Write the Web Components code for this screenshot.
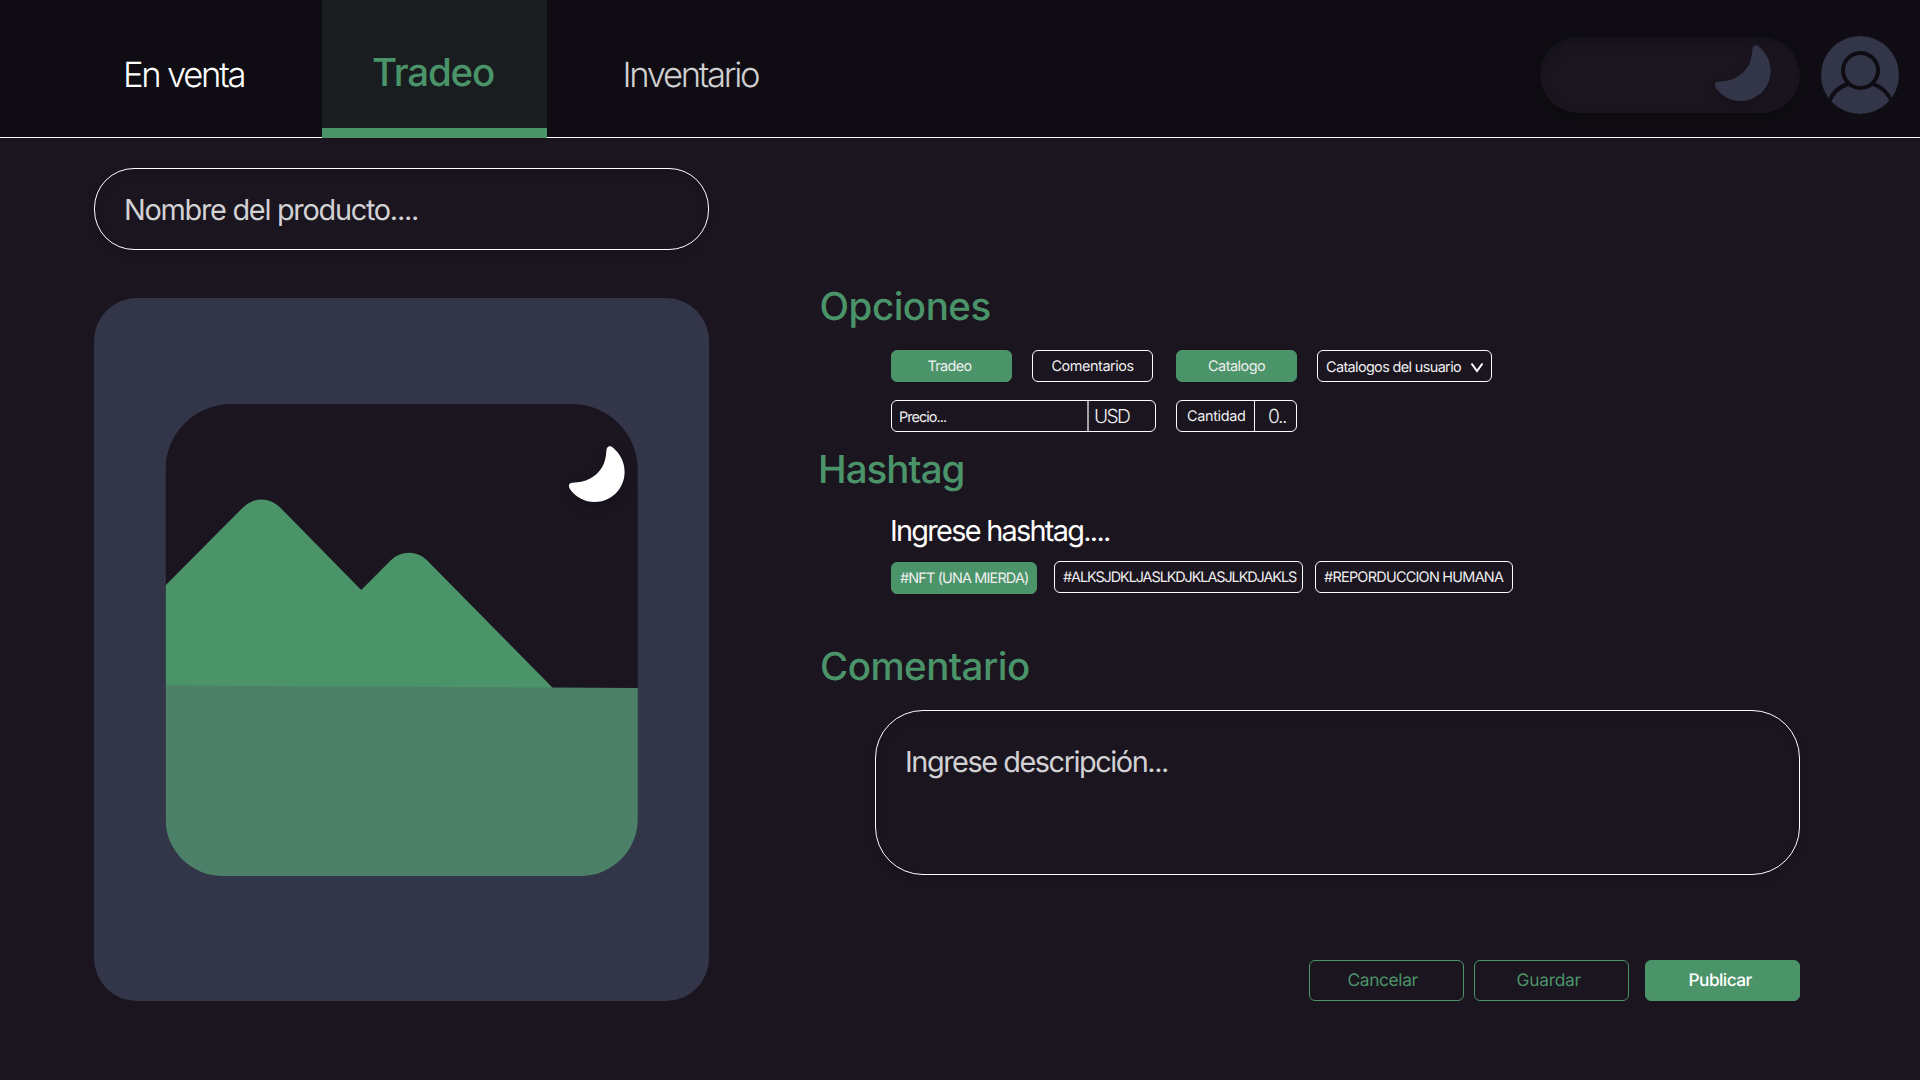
<!DOCTYPE html>
<html lang="es">
<head>
<meta charset="utf-8">
<title>Tradeo</title>
<style>
html,body{margin:0;background:#1b1520}
body{width:1920px;height:1080px;overflow:hidden;font-family:Inter,"Open Sans",sans-serif;color:#fff}
</style>
</head>
<body>
<publish-page></publish-page>
<script>
const CAP = 0.7273;
const make = (tag, html, hook) => customElements.define(tag, class extends HTMLElement {
  connectedCallback() {
    if (this.shadowRoot) return;
    this.attachShadow({mode: 'open'}).innerHTML = html;
    if (hook) hook.call(this, this.shadowRoot);
  }
});

/* One line of text whose box is its cap height and its inked width (w). */
make('fit-text', `<style>
:host{display:block;flex:none;white-space:nowrap;text-rendering:geometricPrecision}
span{display:block}
</style><span></span>`, function (root) {
  const span = root.querySelector('span'), text = this.getAttribute('text');
  const cap = +this.getAttribute('cap'), w = +this.getAttribute('w'), weight = this.getAttribute('weight') || 400;
  const fs = cap / CAP;
  const ctx = document.createElement('canvas').getContext('2d');
  ctx.font = `${weight} ${fs}px Inter, "Open Sans", sans-serif`;
  const m = ctx.measureText(text);
  const ls = (w - m.actualBoundingBoxLeft - m.actualBoundingBoxRight) / (text.length - 1);
  span.textContent = text;
  this.style.cssText += `;width:${w}px;height:${cap}px`;
  span.style.cssText = `font:${weight} ${fs}px/${cap}px Inter,"Open Sans",sans-serif;letter-spacing:${ls}px;margin-left:${m.actualBoundingBoxLeft}px`;
});

make('moon-icon', `<style>:host{display:block;width:56px;height:56px}svg{display:block;overflow:visible;filter:drop-shadow(0 4px 4px rgba(0,0,0,.25))}</style>
<svg width="56" height="56" viewBox="0 0 56 56"><path fill="currentColor" d="M37.3 5.5C37.5 .4 40.6 -1.2 44 1.8C51.5 8 55.6 16.5 55.6 26C55.6 43 42 56 25.6 56C15.6 56 6.6 51 1 43.2C-.9 40 -.6 37.2 3.6 36.8C10.6 36.2 16 35.6 21.6 32.3C31.6 26.5 36.6 18 37.3 5.5Z"/></svg>`);

make('user-avatar', `<style>:host{display:block;width:78px;height:78px}svg{display:block}</style>
<svg width="78" height="78" viewBox="0 0 78 78"><defs><clipPath id="c"><circle cx="39" cy="39" r="39"/></clipPath></defs>
<circle cx="39" cy="39" r="39" fill="#333649"/>
<g clip-path="url(#c)" fill="none" stroke="#0f0d13" stroke-width="4"><path d="M8 66C11.5 57 18 50.5 27 48.2M52 48.2C60 50.5 67 57 71 66"/><circle cx="39.5" cy="34.5" r="17.5"/></g></svg>`);

make('nav-tab', `<style>
:host{display:flex;box-sizing:border-box;height:138px;align-items:flex-start;color:#fff}
:host([muted]){color:#cfcfd0}
:host([active]){width:225px;justify-content:center;background:#191d1f;border-bottom:10px solid #4b9469;color:#4b9469}
</style><slot></slot>`);

make('app-header', `<style>
:host{display:flex;height:137px;background:#0f0d13;border-bottom:1px solid #fff;box-sizing:content-box}
nav{display:flex;flex:1;padding-left:125px}
nav-tab{padding-top:63px}
nav-tab[active]{padding-top:59px;margin:0 79px 0 78px}
.toggle{width:260px;height:76px;margin-top:37px;box-sizing:border-box;border-radius:38px;background:#1b1520;display:flex;justify-content:flex-end;padding:8px 29px 0 0;color:#333649;box-shadow:0 4px 10px rgba(0,0,0,.25),inset 0 4px 8px rgba(15,16,24,.55)}
user-avatar{margin:36px 21px 0 21px}
</style>
<nav>
<nav-tab><fit-text text="En venta" cap="25.2" w="118.5" weight="340" style="margin:0 -.5px 0 1px"></fit-text></nav-tab>
<nav-tab active style="margin-left:77.5px"><fit-text text="Tradeo" cap="28" w="121" weight="480" style="margin-right:1px"></fit-text></nav-tab>
<nav-tab muted><fit-text text="Inventario" cap="25.2" w="133.5" weight="280"></fit-text></nav-tab>
</nav>
<div class="toggle"><moon-icon></moon-icon></div><user-avatar></user-avatar>`);

make('text-box', `<style>
:host{display:block;box-sizing:border-box;border:1px solid #fff;color:#d2d1d3;padding:30px 0 0 31px;box-shadow:0 4px 6px rgba(10,10,14,.12),inset 0 4px 6px rgba(10,10,14,.12)}
</style><slot></slot>`);

make('chip-box', `<style>
:host{display:flex;flex:none;box-sizing:border-box;height:32px;border:1px solid #fff;border-radius:6px;color:#f0eff0}
:host([on]){background:#4b9469;border-color:#4b9469}
:host([action]){height:41px;width:155px;border-color:#4b9469;color:#4b9469}
:host([action][on]){color:#fff}
</style><slot></slot>`);

make('photo-placeholder', `<style>
:host{display:block;box-sizing:border-box;width:615px;height:703px;border-radius:43px;background:#333649;padding:106px 71px}
.pic{position:relative;width:473px;height:472px;color:#fff}
svg{display:block}
moon-icon{position:absolute;left:404px;top:42px}
</style>
<div class="pic"><svg width="473" height="472" viewBox="-.4 0 473 472">
<defs><clipPath id="f"><path d="M66 0H406.4A66 66 0 0 1 472.4 66V415A57 57 0 0 1 415.4 472H57A57 57 0 0 1 0 415V66A66 66 0 0 1 66 0Z"/></clipPath></defs>
<g clip-path="url(#f)"><rect width="473" height="472" fill="#1b1520"/>
<path fill="#4b9469" d="M0 181.5L77.5 103.5A26 26 0 0 1 114.8 103.5L195.8 186L225.2 156.4A26 26 0 0 1 261.8 156.4L388 284.5L0 284.5Z"/>
<path fill="#4c8069" d="M0 281.5L473 284V472H0Z"/></g></svg><moon-icon></moon-icon></div>`);

make('publish-page', `<style>
:host{display:flex;flex-direction:column;width:1920px;height:1080px;background:#1b1520}
main{display:flex;padding-left:94px}
.left{width:615px;padding-top:30px}
.left text-box{height:82px;border-radius:40px;margin-bottom:48px}
.right{width:979px;margin-left:112px;padding-top:155px}
.head{color:#4b9469}
.row{display:flex;padding-left:70px}
.opts chip-box fit-text{margin-top:10.5px}
.divider{width:1px;background:#fff;height:30px}
.tags{align-items:flex-start}
.tags fit-text{margin:10.5px 0 0 8px}
.actions{justify-content:flex-end}
.actions fit-text{margin-top:13.5px}
.c{justify-content:center}
.right text-box{height:165px;border-radius:48px;margin-left:54px;padding:40px 0 0 31px}
</style>
<app-header></app-header>
<main>
<section class="left">
<text-box><fit-text text="Nombre del producto...." cap="21" w="292" weight="380"></fit-text></text-box>
<photo-placeholder></photo-placeholder>
</section>
<section class="right">
<fit-text class="head" text="Opciones" cap="28" w="168" weight="480" style="margin-left:.5px"></fit-text>
<div class="row opts" style="margin-top:29px">
<chip-box on class="c" style="width:121px;padding-right:4px"><fit-text text="Tradeo" cap="10.5" w="44"></fit-text></chip-box>
<chip-box class="c" style="width:121px;margin-left:20px"><fit-text text="Comentarios" cap="10.5" w="82"></fit-text></chip-box>
<chip-box on class="c" style="width:121px;margin-left:23px"><fit-text text="Catalogo" cap="10.5" w="57"></fit-text></chip-box>
<chip-box style="width:175px;margin-left:20px;padding-left:8px"><fit-text text="Catalogos del usuario" cap="10.5" w="135" style="margin-top:11.5px"></fit-text>
<svg width="14" height="11" viewBox="0 0 14 11" style="margin:11px 0 0 9px"><path d="M1.5 1.5L7 9L12.5 1.5" fill="none" stroke="#fff" stroke-width="2"/></svg></chip-box>
</div>
<div class="row opts" style="margin-top:18px">
<chip-box style="width:265px;padding-left:8px"><fit-text text="Precio..." cap="10.5" w="47" style="margin-top:11.5px"></fit-text>
<div class="divider" style="width:2px;margin-left:140px;opacity:.6"></div><fit-text text="USD" cap="14" w="35" weight="280" style="margin:7.5px 0 0 6px"></fit-text></chip-box>
<chip-box style="width:121px;margin-left:20px;padding-left:10px"><fit-text text="Cantidad" cap="10.5" w="58"></fit-text>
<div class="divider" style="margin-left:9px"></div><fit-text text="0.." cap="14" w="17" weight="280" style="margin:7.5px 0 0 14px"></fit-text></chip-box>
</div>
<fit-text class="head" text="Hashtag" cap="28" w="142.5" weight="480" style="margin-top:24px"></fit-text>
<fit-text text="Ingrese hashtag...." cap="21" w="218" weight="380" style="margin:36px 0 0 71px"></fit-text>
<div class="row tags" style="margin-top:20px">
<chip-box on style="width:146px;margin-top:1px"><fit-text text="#NFT (UNA MIERDA)" cap="10.5" w="128"></fit-text></chip-box>
<chip-box style="width:249px;margin-left:17px"><fit-text text="#ALKSJDKLJASLKDJKLASJLKDJAKLS" cap="10.5" w="234"></fit-text></chip-box>
<chip-box style="width:198px;margin-left:12px"><fit-text text="#REPORDUCCION HUMANA" cap="10.5" w="180"></fit-text></chip-box>
</div>
<fit-text class="head" text="Comentario" cap="28" w="207" weight="480" style="margin:59px 0 29px 1px"></fit-text>
<text-box><fit-text text="Ingrese descripción..." cap="21" w="261" weight="380"></fit-text></text-box>
<div class="row actions" style="margin-top:85px">
<chip-box action class="c" style="padding-right:6px"><fit-text text="Cancelar" cap="12.6" w="70"></fit-text></chip-box>
<chip-box action class="c" style="margin-left:10px;padding-right:4px"><fit-text text="Guardar" cap="12.6" w="64"></fit-text></chip-box>
<chip-box action on class="c" style="margin-left:16px;padding-right:3px"><fit-text text="Publicar" cap="12.6" w="63" weight="550"></fit-text></chip-box>
</div>
</section>
</main>`);
</script>
</body>
</html>
